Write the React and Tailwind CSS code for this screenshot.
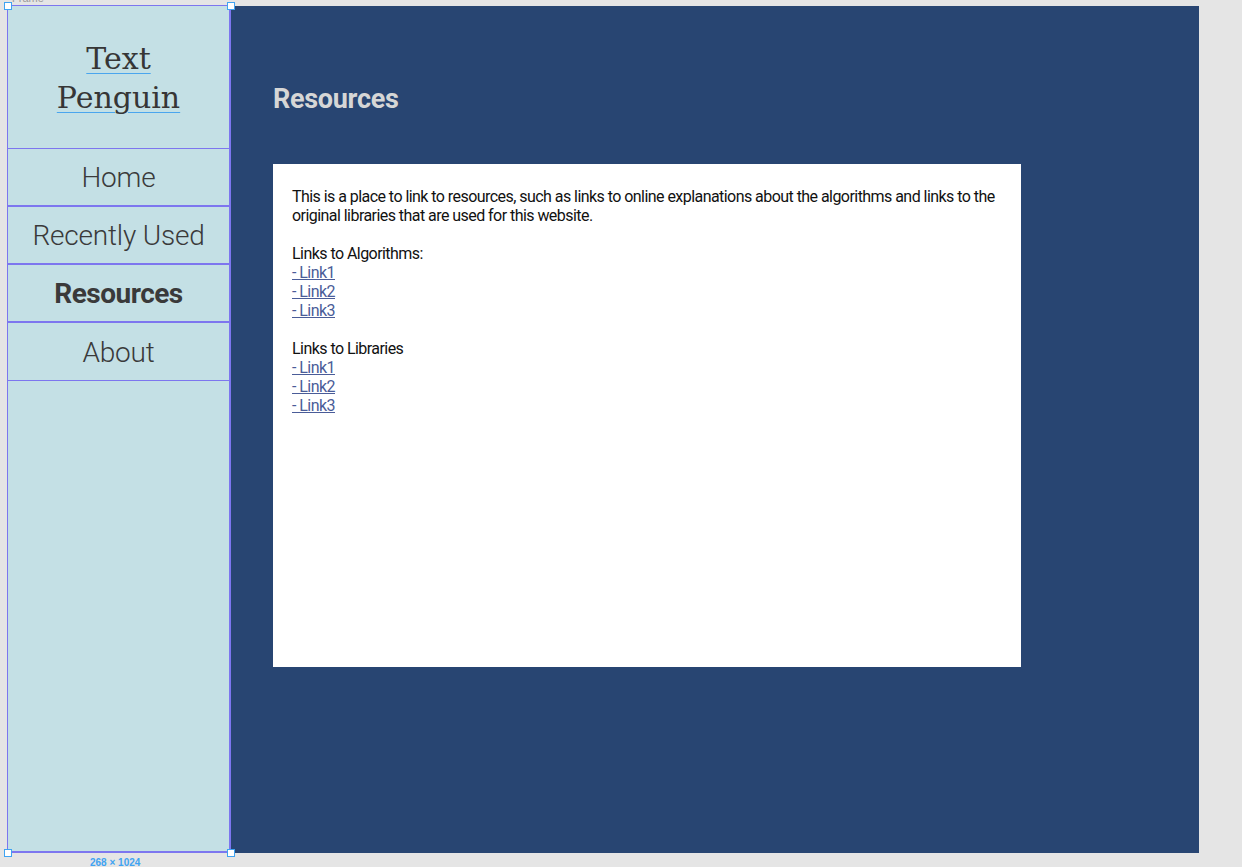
import React from "react";

const navItems = [
  { label: "Home" },
  { label: "Recently Used" },
  { label: "Resources", active: true },
  { label: "About" },
];

const algoLinks = ["- Link1", "- Link2", "- Link3"];
const libLinks = ["- Link1", "- Link2", "- Link3"];

const Handle = ({ className }) => (
  <span className={`absolute h-[8px] w-[8px] border border-[#3fa3f2] bg-white ${className}`} />
);

export default function App() {
  return (
    <div className="relative h-[867px] w-[1242px] overflow-hidden bg-[#e5e5e5]">
      {/* canvas label */}
      <span className="absolute left-[12px] top-[-8px] text-[11px] leading-[13px] text-[#9a9a9a] [font-family:'Liberation_Sans',sans-serif]">
        Frame
      </span>

      <div className="ml-[7px] mt-[5px] flex h-[848px] w-[1192px]">
        {/* sidebar */}
        <aside className="flex w-[224px] shrink-0 flex-col border-l border-r-2 border-t border-b-2 border-[#7d76ef] bg-[#c4e0e5]">
          <div className="flex h-[143px] flex-col items-center justify-center border-b border-b-[#7d76ef] pt-[2px] text-[30px] leading-[39px] text-[#363636] [font-family:'DejaVu_Serif','Liberation_Serif',serif]">
            <span className="underline decoration-[#4aa6ee] decoration-1 underline-offset-[4px]">Text</span>
            <span className="underline decoration-[#4aa6ee] decoration-1 underline-offset-[4px]">Penguin</span>
          </div>
          <nav className="flex flex-col">
            {navItems.map((item, i) => (
              <div
                key={item.label}
                className={`flex h-[58px] items-center justify-center pt-[2px] text-[28px] text-[#3a3a3a] [font-family:'Roboto',sans-serif] ${
                  i === navItems.length - 1 ? "border-b border-b-[#7d76ef]" : "border-b-2 border-b-[#7d76ef]"
                } ${item.active ? "font-bold tracking-[-0.5px]" : "font-light tracking-[-0.2px]"}`}
              >
                {item.label}
              </div>
            ))}
          </nav>
        </aside>

        {/* main */}
        <main className="mt-[1px] flex-1 bg-[#284572] pl-[42px] pt-[76px]">
          <h1 className="text-[27px] font-bold leading-[34px] tracking-[-0.3px] text-[#d6d6d6] [font-family:'Roboto',sans-serif]">
            Resources
          </h1>
          <div className="mt-[48px] h-[503px] w-[748px] bg-white px-[19px] py-[23px] text-[16px] leading-[19px] tracking-[-0.55px] text-[#111] [font-family:'Roboto',sans-serif]">
            <p>
              This is a place to link to resources, such as links to online explanations about the algorithms and links to the
              original libraries that are used for this website.
            </p>
            <div className="mt-[19px]">
              <p>Links to Algorithms:</p>
              {algoLinks.map((l, i) => (
                <a key={i} href="#" className="block w-fit text-[#4a5c98] underline">
                  {l}
                </a>
              ))}
            </div>
            <div className="mt-[19px]">
              <p>Links to Libraries</p>
              {libLinks.map((l, i) => (
                <a key={i} href="#" className="block w-fit text-[#4a5c98] underline">
                  {l}
                </a>
              ))}
            </div>
          </div>
        </main>
      </div>

      {/* selection handles */}
      <Handle className="left-[4px] top-[2px]" />
      <Handle className="left-[227px] top-[2px]" />
      <Handle className="left-[4px] top-[849px]" />
      <Handle className="left-[227px] top-[849px]" />
      <span className="absolute left-[90px] top-[857px] text-[10px] leading-[12px] font-bold text-[#3fa3f2] [font-family:'Liberation_Sans',sans-serif]">
        268 × 1024
      </span>
    </div>
  );
}
